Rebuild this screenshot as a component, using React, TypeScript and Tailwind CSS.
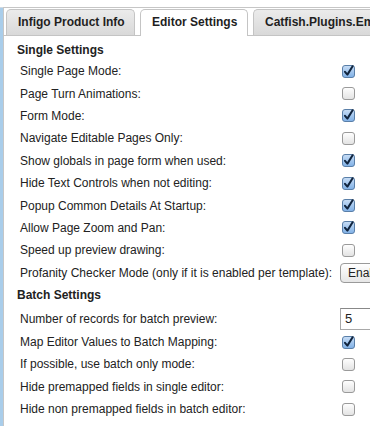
import React from "react";

type Row =
    | { kind: "check"; label: string; checked: boolean }
    | { kind: "button"; label: string; value: string }
    | { kind: "input"; label: string; value: string };

const single: Row[] = [
    { kind: "check", label: "Single Page Mode:", checked: true },
    { kind: "check", label: "Page Turn Animations:", checked: false },
    { kind: "check", label: "Form Mode:", checked: true },
    { kind: "check", label: "Navigate Editable Pages Only:", checked: false },
    { kind: "check", label: "Show globals in page form when used:", checked: true },
    { kind: "check", label: "Hide Text Controls when not editing:", checked: true },
    { kind: "check", label: "Popup Common Details At Startup:", checked: true },
    { kind: "check", label: "Allow Page Zoom and Pan:", checked: true },
    { kind: "check", label: "Speed up preview drawing:", checked: false },
    { kind: "button", label: "Profanity Checker Mode (only if it is enabled per template):", value: "Enabled" },
];

const batch: Row[] = [
    { kind: "input", label: "Number of records for batch preview:", value: "5" },
    { kind: "check", label: "Map Editor Values to Batch Mapping:", checked: true },
    { kind: "check", label: "If possible, use batch only mode:", checked: false },
    { kind: "check", label: "Hide premapped fields in single editor:", checked: false },
    { kind: "check", label: "Hide non premapped fields in batch editor:", checked: false },
];

function Checkbox({ checked }: { checked: boolean }) {
    return (
        <svg width="13" height="13" viewBox="0 0 13 13">
            <defs>
                <linearGradient id="off" x1="0" y1="0" x2="0" y2="1">
                    <stop offset="0" stopColor="#ffffff" />
                    <stop offset="1" stopColor="#e2e2e2" />
                </linearGradient>
                <linearGradient id="on" x1="0" y1="0" x2="0" y2="1">
                    <stop offset="0" stopColor="#c9def6" />
                    <stop offset="1" stopColor="#7fb0e6" />
                </linearGradient>
            </defs>
            <rect x="0.5" y="0.5" width="12" height="12" rx="2.5" fill={checked ? "url(#on)" : "url(#off)"} stroke={checked ? "#5a7fa8" : "#9a9a9a"} />
            {checked && <path d="M3 6.8 L5.4 9.6 L10.6 1.2" fill="none" stroke="#10243e" strokeWidth="2" strokeLinecap="round" strokeLinejoin="round" />}
        </svg>
    );
}

function SettingRow({ row, tall }: { row: Row; tall?: boolean }) {
    return (
        <div className={`flex items-center ${tall ? "h-[24px]" : "h-[22.4px]"}`}>
            <span className="pl-[17px] whitespace-nowrap flex-1 min-w-0">{row.label}</span>
            <div className="w-[30px] shrink-0 flex items-center">
                {row.kind === "check" && (
                    <span className="ml-[2px] flex">
                        <Checkbox checked={row.checked} />
                    </span>
                )}
                {row.kind === "button" && (
                    <div className="h-[20px] w-[60px] shrink-0 border border-[#9a9a9a] rounded-[4px] bg-gradient-to-b from-white to-[#e6e6e6] pl-[7px] text-[12px] leading-[18px] overflow-hidden whitespace-nowrap">
                        {row.value}
                    </div>
                )}
                {row.kind === "input" && (
                    <div className="h-[22px] w-[60px] shrink-0 border border-[#a8a8a8] border-t-[#888] bg-white pl-[4px] text-[13px] leading-[20px]">
                        {row.value}
                    </div>
                )}
            </div>
        </div>
    );
}

export default function App() {
    return (
        <main className="w-[370px] h-[426px] overflow-hidden bg-white pt-[7px] font-['Liberation_Sans',Arial,sans-serif] text-[12px] text-[#222]">
            <div className="flex h-full">
                <div className="w-[3px] shrink-0 bg-[#a9cdea] border-t border-[#cfd9e2]"></div>
                <div className="flex-1 flex flex-col border-l border-t border-[#c6c6c6] bg-white min-w-0">
                    <div className="flex items-end gap-[5px] pl-[2px] pt-[1px] h-[27px] bg-white">
                        <div className="h-[26px] w-[129px] shrink-0 rounded-t-[5px] border border-b-0 border-[#c4c4c4] bg-gradient-to-b from-[#ebebeb] to-[#d9d9d9] pl-[11px] font-bold text-[12px] leading-[24px] text-[#1f1f1f] whitespace-nowrap">
                            Infigo Product Info
                        </div>
                        <div className="h-[27px] w-[108px] shrink-0 rounded-t-[5px] border border-b-0 border-[#c4c4c4] bg-white -mb-[1px] pl-[11px] font-bold text-[12px] leading-[25px] text-[#1f1f1f] whitespace-nowrap relative z-10">
                            Editor Settings
                        </div>
                        <div className="h-[26px] flex-1 rounded-tl-[5px] border border-b-0 border-r-0 border-[#c4c4c4] bg-gradient-to-b from-[#ebebeb] to-[#d9d9d9] pl-[11px] font-bold text-[12px] leading-[24px] text-[#1f1f1f] whitespace-nowrap overflow-hidden">
                            Catfish.Plugins.Embed
                        </div>
                    </div>
                    <div className="border-t border-[#c4c4c4] pt-[4px] -ml-[1px]">
                        <div className="h-[20px] flex items-center pl-[14px] font-bold">Single Settings</div>
                        {single.map((r) => (
                            <SettingRow key={r.label} row={r} />
                        ))}
                        <div className="h-[23px] flex items-center pl-[14px] font-bold">Batch Settings</div>
                        {batch.map((r, i) => (
                            <SettingRow key={r.label} row={r} tall={i === 0} />
                        ))}
                    </div>
                </div>
            </div>
        </main>
    );
}
